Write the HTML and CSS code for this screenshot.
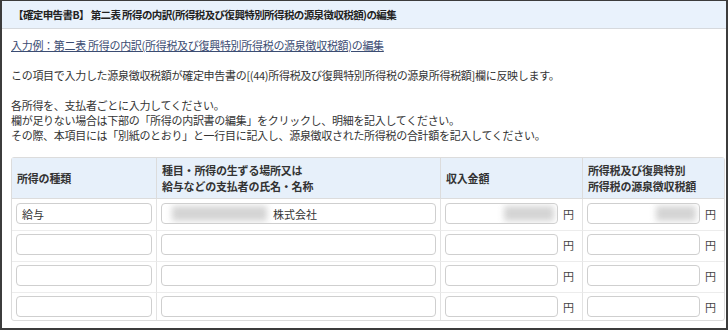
FILE: index.html
```html
<!DOCTYPE html>
<html lang="ja">
<head>
  <meta charset="UTF-8" />
  <title>第二表 所得の内訳の編集</title>
  <link rel="stylesheet" href="styles.css">
</head>
<body>
  <div class="window">
    <div class="title-bar">【確定申告書B】 第二表 所得の内訳(所得税及び復興特別所得税の源泉徴収税額)の編集</div>

    <div class="content">
      <p class="example"><a href="#">入力例：第二表 所得の内訳(所得税及び復興特別所得税の源泉徴収税額)の編集</a></p>

      <p class="note">この項目で入力した源泉徴収税額が確定申告書の[(44)所得税及び復興特別所得税の源泉所得税額]欄に反映します。</p>

      <p class="note lines">
        各所得を、支払者ごとに入力してください。<br>
        欄が足りない場合は下部の「所得の内訳書の編集」をクリックし、明細を記入してください。<br>
        その際、本項目には「別紙のとおり」と一行目に記入し、源泉徴収された所得税の合計額を記入してください。
      </p>

      <table class="income">
        <colgroup>
          <col class="c-kind">
          <col class="c-payer">
          <col class="c-amount">
          <col class="c-tax">
        </colgroup>
        <thead>
          <tr>
            <th>所得の種類</th>
            <th>種目・所得の生ずる場所又は<br>給与などの支払者の氏名・名称</th>
            <th>収入金額</th>
            <th>所得税及び復興特別<br>所得税の源泉徴収税額</th>
          </tr>
        </thead>
        <tbody>
          <tr>
            <td><div class="field">給与</div></td>
            <td><div class="field"><span class="blur blur-name"></span>株式会社</div></td>
            <td><div class="money"><div class="field right"><span class="blur blur-num"></span></div><span class="yen">円</span></div></td>
            <td><div class="money"><div class="field right"><span class="blur blur-tax"></span></div><span class="yen">円</span></div></td>
          </tr>
          <tr>
            <td><div class="field"></div></td>
            <td><div class="field"></div></td>
            <td><div class="money"><div class="field"></div><span class="yen">円</span></div></td>
            <td><div class="money"><div class="field"></div><span class="yen">円</span></div></td>
          </tr>
          <tr>
            <td><div class="field"></div></td>
            <td><div class="field"></div></td>
            <td><div class="money"><div class="field"></div><span class="yen">円</span></div></td>
            <td><div class="money"><div class="field"></div><span class="yen">円</span></div></td>
          </tr>
          <tr>
            <td><div class="field"></div></td>
            <td><div class="field"></div></td>
            <td><div class="money"><div class="field"></div><span class="yen">円</span></div></td>
            <td><div class="money"><div class="field"></div><span class="yen">円</span></div></td>
          </tr>
        </tbody>
      </table>
    </div>
  </div>
</body>
</html>
```

FILE: styles.css
```css
body {
  margin: 0;
  font-family: "Noto Sans CJK JP", "Noto Sans", sans-serif;
  font-size: 11px;
  color: #333;
  background: #fff;
}
.window {
  width: 728px;
  height: 330px;
  box-sizing: border-box;
  border: 2px solid #3c3c3c;
  border-top-width: 1px;
  overflow: hidden;
}
.title-bar {
  height: 27px;
  display: flex;
  align-items: center;
  padding-left: 11px;
  background: #e9f2fc;
  border-bottom: 1px solid #d6d9dd;
  font-weight: bold;
  font-size: 10.5px;
  letter-spacing: -0.6px;
  color: #222;
}
.content {
  padding: 0 3px 0 9px;
}
p {
  margin: 0;
  line-height: 15px;
  letter-spacing: -0.3px;
}
.example {
  margin-top: 9px;
}
.example a {
  color: #3b4c72;
  text-decoration: underline;
}
.note {
  margin-top: 15px;
}
.lines {
  margin-top: 15px;
}
.income {
  margin-top: 14px;
  width: 712px;
  border-collapse: separate;
  border-spacing: 0;
  border: 1px solid #dcdcdc;
  border-radius: 3px;
  table-layout: fixed;
}
.c-kind { width: 144px; }
.c-payer { width: 284px; }
.c-amount { width: 142px; }
.c-tax { width: 142px; }
.income th {
  padding: 4px 5px;
  text-align: left;
  font-weight: bold;
  line-height: 16px;
  letter-spacing: -0.2px;
  background: #e7f0fa;
  border-bottom: 1px solid #dcdcdc;
  border-left: 1px solid #dcdcdc;
}
.income td {
  padding: 3px 4px 6px;
  border-left: 1px solid #e3e3e3;
  border-top: 1px solid #ececec;
}
.income tr > :first-child {
  border-left: none;
}
.income tbody tr:first-child td {
  border-top: none;
  padding-top: 4px;
}
.income tbody tr:last-child td {
  padding-bottom: 3px;
}
.field {
  height: 19px;
  border: 1px solid #cfcfcf;
  border-radius: 4px;
  background: #fff;
  display: flex;
  align-items: center;
  padding: 0 5px;
  overflow: hidden;
}
.field.right {
  justify-content: flex-end;
  padding-right: 3px;
}
.money {
  display: flex;
  align-items: center;
  gap: 5px;
  padding-right: 4px;
}
.money .field {
  flex: 1;
}
.yen {
  color: #444;
}
.blur {
  display: inline-block;
  height: 15px;
  background: #d4d4d4;
  filter: blur(3px);
}
.blur-name {
  width: 95px;
  margin: 0 6px 0 5px;
}
.blur-num {
  width: 50px;
}
.blur-tax {
  width: 40px;
}
```
